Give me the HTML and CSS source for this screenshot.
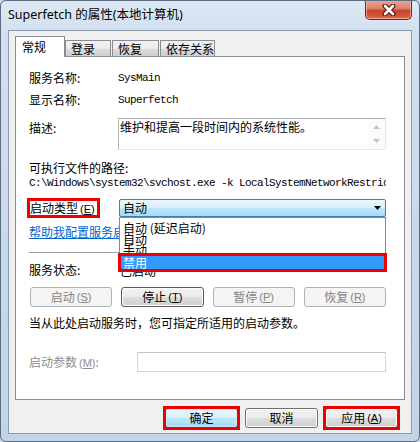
FILE: index.html
```html
<!DOCTYPE html>
<html>
<head>
<meta charset="utf-8">
<link rel="stylesheet" href="styles.css">
</head>
<body>
<div class="window">
  <div class="titlebar">
    <span class="title">Superfetch 的属性(本地计算机)</span>
    <div class="close">
      <svg width="14" height="12" viewBox="0 0 14 12">
        <path d="M3 2 L11 10 M11 2 L3 10" stroke="#5a1a10" stroke-width="5" stroke-linecap="round"/>
        <path d="M3 2 L11 10 M11 2 L3 10" stroke="#ffffff" stroke-width="2.6" stroke-linecap="round"/>
      </svg>
    </div>
  </div>
  <div class="client">
    <div class="tabs">
      <div class="tab active">常规</div>
      <div class="tab t2">登录</div>
      <div class="tab t3">恢复</div>
      <div class="tab t4">依存关系</div>
    </div>
    <div class="panel">
      <div class="row r1"><span class="label">服务名称:</span><span class="mono">SysMain</span></div>
      <div class="row r2"><span class="label">显示名称:</span><span class="mono">Superfetch</span></div>
      <div class="row desc">
        <span class="label">描述:</span>
        <div class="textbox">
          <span class="tbtext">维护和提高一段时间内的系统性能。</span>
          <div class="vscroll">
            <svg width="7" height="4" viewBox="0 0 7 4"><path d="M0 4 L3.5 0 L7 4 Z" fill="#c2c5c9"/></svg>
            <svg width="7" height="4" viewBox="0 0 7 4"><path d="M0 0 L3.5 4 L7 0 Z" fill="#c2c5c9"/></svg>
          </div>
        </div>
      </div>
      <div class="pathlabel">可执行文件的路径:</div>
      <div class="path mono">C:\Windows\system32\svchost.exe -k LocalSystemNetworkRestricted</div>
      <div class="row startup">
        <span class="label lab-start"><span class="redbox">启动类型<span class="acc">(<u>E</u>)</span></span></span>
        <div class="combo-wrap">
          <div class="combo">
            <span>自动</span>
            <svg width="7" height="4" viewBox="0 0 7 4"><path d="M0 0 L7 0 L3.5 4 Z" fill="#000"/></svg>
          </div>
          <div class="dropdown">
            <div class="item">自动 (延迟启动)</div>
            <div class="item">自动</div>
            <div class="item">手动</div>
            <div class="item sel">禁用</div>
          </div>
        </div>
      </div>
      <div class="linkrow"><span class="link">帮助我配置服务启动选项。</span></div>
      <div class="sep"></div>
      <div class="row status"><span class="label">服务状态:</span><span class="val">已启动</span></div>
      <div class="btnrow">
        <div class="btn disabled">启动<span class="acc">(<u>S</u>)</span></div>
        <div class="btn stop">停止<span class="acc">(<u>T</u>)</span></div>
        <div class="btn disabled">暂停<span class="acc">(<u>P</u>)</span></div>
        <div class="btn disabled">恢复<span class="acc">(<u>R</u>)</span></div>
      </div>
      <div class="note">当从此处启动服务时，您可指定所适用的启动参数。</div>
      <div class="row params">
        <span class="label plabel">启动参数<span class="acc">(<u>M</u>)</span>:</span>
        <div class="input"></div>
      </div>
    </div>
    <div class="footer">
      <div class="hl"><div class="btn default">确定</div></div>
      <div class="fwrap"><div class="btn">取消</div></div>
      <div class="hl"><div class="btn">应用<span class="acc">(<u>A</u>)</span></div></div>
    </div>
  </div>
</div>
</body>
</html>
```

FILE: styles.css
```css
* { box-sizing: border-box; }
html, body { margin: 0; padding: 0; }
body {
  width: 420px;
  height: 442px;
  overflow: hidden;
  background: #c7d6e8;
  font-family: "Noto Sans CJK SC", "Noto Sans", sans-serif;
  font-size: 12px;
  color: #000;
}
.window {
  width: 420px;
  height: 442px;
  border: 1px solid #5d6c80;
  border-radius: 6px;
  background: linear-gradient(180deg, #dfe9f5 0px, #d2e0f0 30px, #c8d8eb 60%, #c3d4e9 100%);
  display: flex;
  flex-direction: column;
  padding: 0 7px 7px;
  overflow: hidden;
}
.titlebar {
  height: 29px;
  display: flex;
  justify-content: space-between;
  align-items: flex-start;
  flex: 0 0 auto;
}
.title {
  font-family: "Noto Sans", "Noto Sans CJK SC", sans-serif;
  font-size: 12.5px;
  line-height: 16px;
  margin-top: 6px;
  color: #000;
}
.close {
  width: 47px;
  height: 20px;
  margin-top: -1px;
  border: 1px solid #6e2a1d;
  border-top: none;
  border-radius: 0 0 5px 5px;
  background: linear-gradient(180deg, #e9a99a 0%, #dc7f69 45%, #c8452a 55%, #d2583b 85%, #e07a56 100%);
  box-shadow: inset 0 0 0 1px rgba(255, 220, 210, 0.5);
  display: flex;
  align-items: center;
  justify-content: center;
}
.client {
  height: 404px;
  flex: 0 0 auto;
  border: 1px solid #8a9bb0;
  background: #f0f0f0;
  padding: 5px 6px 0 6px;
  display: flex;
  flex-direction: column;
}
.tabs {
  height: 20px;
  display: flex;
  align-items: flex-end;
  flex: 0 0 auto;
}
.tab {
  height: 16px;
  line-height: 15px;
  border: 1px solid #898c95;
  border-bottom: none;
  background: linear-gradient(180deg, #f2f2f2 0%, #ebebeb 50%, #dddddd 50%, #cfcfcf 100%);
  padding-left: 5px;
  font-size: 12px;
  white-space: nowrap;
}
.tab.active {
  height: 21px;
  margin-bottom: -1px;
  width: 50px;
  background: #ffffff;
  position: relative;
  z-index: 1;
  padding-left: 6px;
  line-height: 19px;
}
.tab.t2 { width: 46px; }
.tab.t3 { width: 47px; margin-left: 1px; }
.tab.t4 { width: 55px; margin-left: 1px; }
.panel {
  height: 344px;
  flex: 0 0 auto;
  border: 1px solid #898c95;
  background: #ffffff;
  padding: 13px 18px 0 13px;
  display: flex;
  flex-direction: column;
}
.row {
  display: flex;
  align-items: center;
  flex: 0 0 auto;
}
.label {
  width: 89px;
  flex: 0 0 89px;
  line-height: 16px;
  white-space: nowrap;
}
.r1 { height: 16px; }
.r2 { height: 16px; margin-top: 6px; }
.mono {
  font-family: "Liberation Mono", "Noto Sans CJK SC", monospace;
  font-size: 11px;
  letter-spacing: -0.6px;
}
.desc {
  height: 32px;
  margin-top: 10px;
  align-items: flex-start;
}
.desc .label { padding-top: 2px; }
.textbox {
  flex: 1 1 auto;
  height: 32px;
  border: 1px solid #e3e9ef;
  border-top-color: #abadb3;
  border-left-color: #b5b8be;
  display: flex;
  justify-content: space-between;
}
.tbtext {
  line-height: 14px;
  padding-left: 1px;
  margin-top: 1px;
}
.vscroll {
  width: 17px;
  flex: 0 0 17px;
  display: flex;
  flex-direction: column;
  align-items: center;
  justify-content: space-between;
  padding: 6px 0 6px;
  background: #fbfbfb;
}
.pathlabel {
  margin-top: 10px;
  height: 16px;
  line-height: 16px;
}
.path {
  height: 15px;
  line-height: 15px;
  white-space: nowrap;
  overflow: hidden;
}
.startup {
  height: 18px;
  margin-top: 8px;
  position: relative;
  z-index: 2;
}
.lab-start {
  width: 90px;
  flex: 0 0 90px;
  padding-left: 1px;
}
.redbox {
  display: inline-block;
  line-height: 14px;
  height: 14px;
  padding-right: 2px;
  outline: 3px solid #ee0000;
}
.acc {
  margin-left: 2px;
  font-family: "Liberation Sans", sans-serif;
  font-size: 11px;
}
.combo-wrap {
  flex: 1 1 auto;
  height: 18px;
  position: relative;
}
.combo {
  height: 18px;
  border: 1px solid #3c7fb1;
  border-radius: 2px;
  background: linear-gradient(180deg, #eaf6fd 0%, #d9f0fc 50%, #bee6fd 50%, #a7d9f5 100%);
  display: flex;
  align-items: center;
  justify-content: space-between;
  padding: 0 4px 0 3px;
  line-height: 16px;
}
.dropdown {
  position: absolute;
  left: 0;
  top: 18px;
  width: 100%;
  height: 54px;
  background: #ffffff;
  border: 1px solid #828790;
  padding: 4px 1px 1px 1px;
}
.item {
  height: 11px;
  line-height: 11px;
  padding-left: 2px;
  white-space: nowrap;
}
.item.sel {
  height: 13px;
  line-height: 13px;
  margin-top: 1px;
  background: #3399ff;
  color: #ffffff;
  outline: 3px solid #ee0000;
  position: relative;
}
.linkrow {
  margin-top: 7px;
  height: 16px;
  line-height: 16px;
  white-space: nowrap;
}
.link {
  color: #0066cc;
  text-decoration: underline;
}
.sep {
  margin-top: 12px;
  height: 1px;
  border-top: 1px solid #a0a0a0;
}
.status {
  height: 16px;
  margin-top: 9px;
}
.val { margin-left: 2px; }
.btnrow {
  margin-top: 9px;
  height: 20px;
  margin-left: 1px;
  display: grid;
  grid-template-columns: repeat(4, 1fr);
  column-gap: 9px;
}
.btn {
  height: 20px;
  border: 1px solid #707070;
  border-radius: 3px;
  background: linear-gradient(180deg, #f2f2f2 0%, #ebebeb 50%, #dddddd 50%, #cfcfcf 100%);
  box-shadow: inset 0 0 0 1px #fcfcfc;
  display: flex;
  align-items: center;
  justify-content: center;
  line-height: 16px;
  white-space: nowrap;
}
.btn.stop { border-color: #5a5a5a; }
.btn.disabled {
  border-color: #adb2b5;
  background: #f4f4f4;
  box-shadow: none;
  color: #838383;
}
.note {
  margin-top: 8px;
  height: 16px;
  line-height: 16px;
}
.params {
  margin-top: 21px;
  height: 20px;
}
.plabel {
  width: 108px;
  flex: 0 0 108px;
  color: #8d8d8d;
}
.input {
  flex: 1 1 auto;
  height: 20px;
  border: 1px solid #d5d5d5;
  border-top-color: #c2c4c8;
  background: #ffffff;
}
.footer {
  flex: 1 1 auto;
  display: flex;
  justify-content: flex-end;
  align-items: flex-start;
  padding: 8px 7px 0 0;
  column-gap: 7px;
}
.hl, .fwrap {
  width: 73px;
  flex: 0 0 73px;
}
.hl {
  outline: 3px solid #ee0000;
  outline-offset: -1px;
  position: relative;
}
.btn.default {
  border-color: #3c7fb1;
  background: linear-gradient(180deg, #eaf6fd 0%, #d9f0fc 50%, #bee6fd 50%, #a7d9f5 100%);
  box-shadow: inset 0 0 0 1px #c9ecfc;
}
```
